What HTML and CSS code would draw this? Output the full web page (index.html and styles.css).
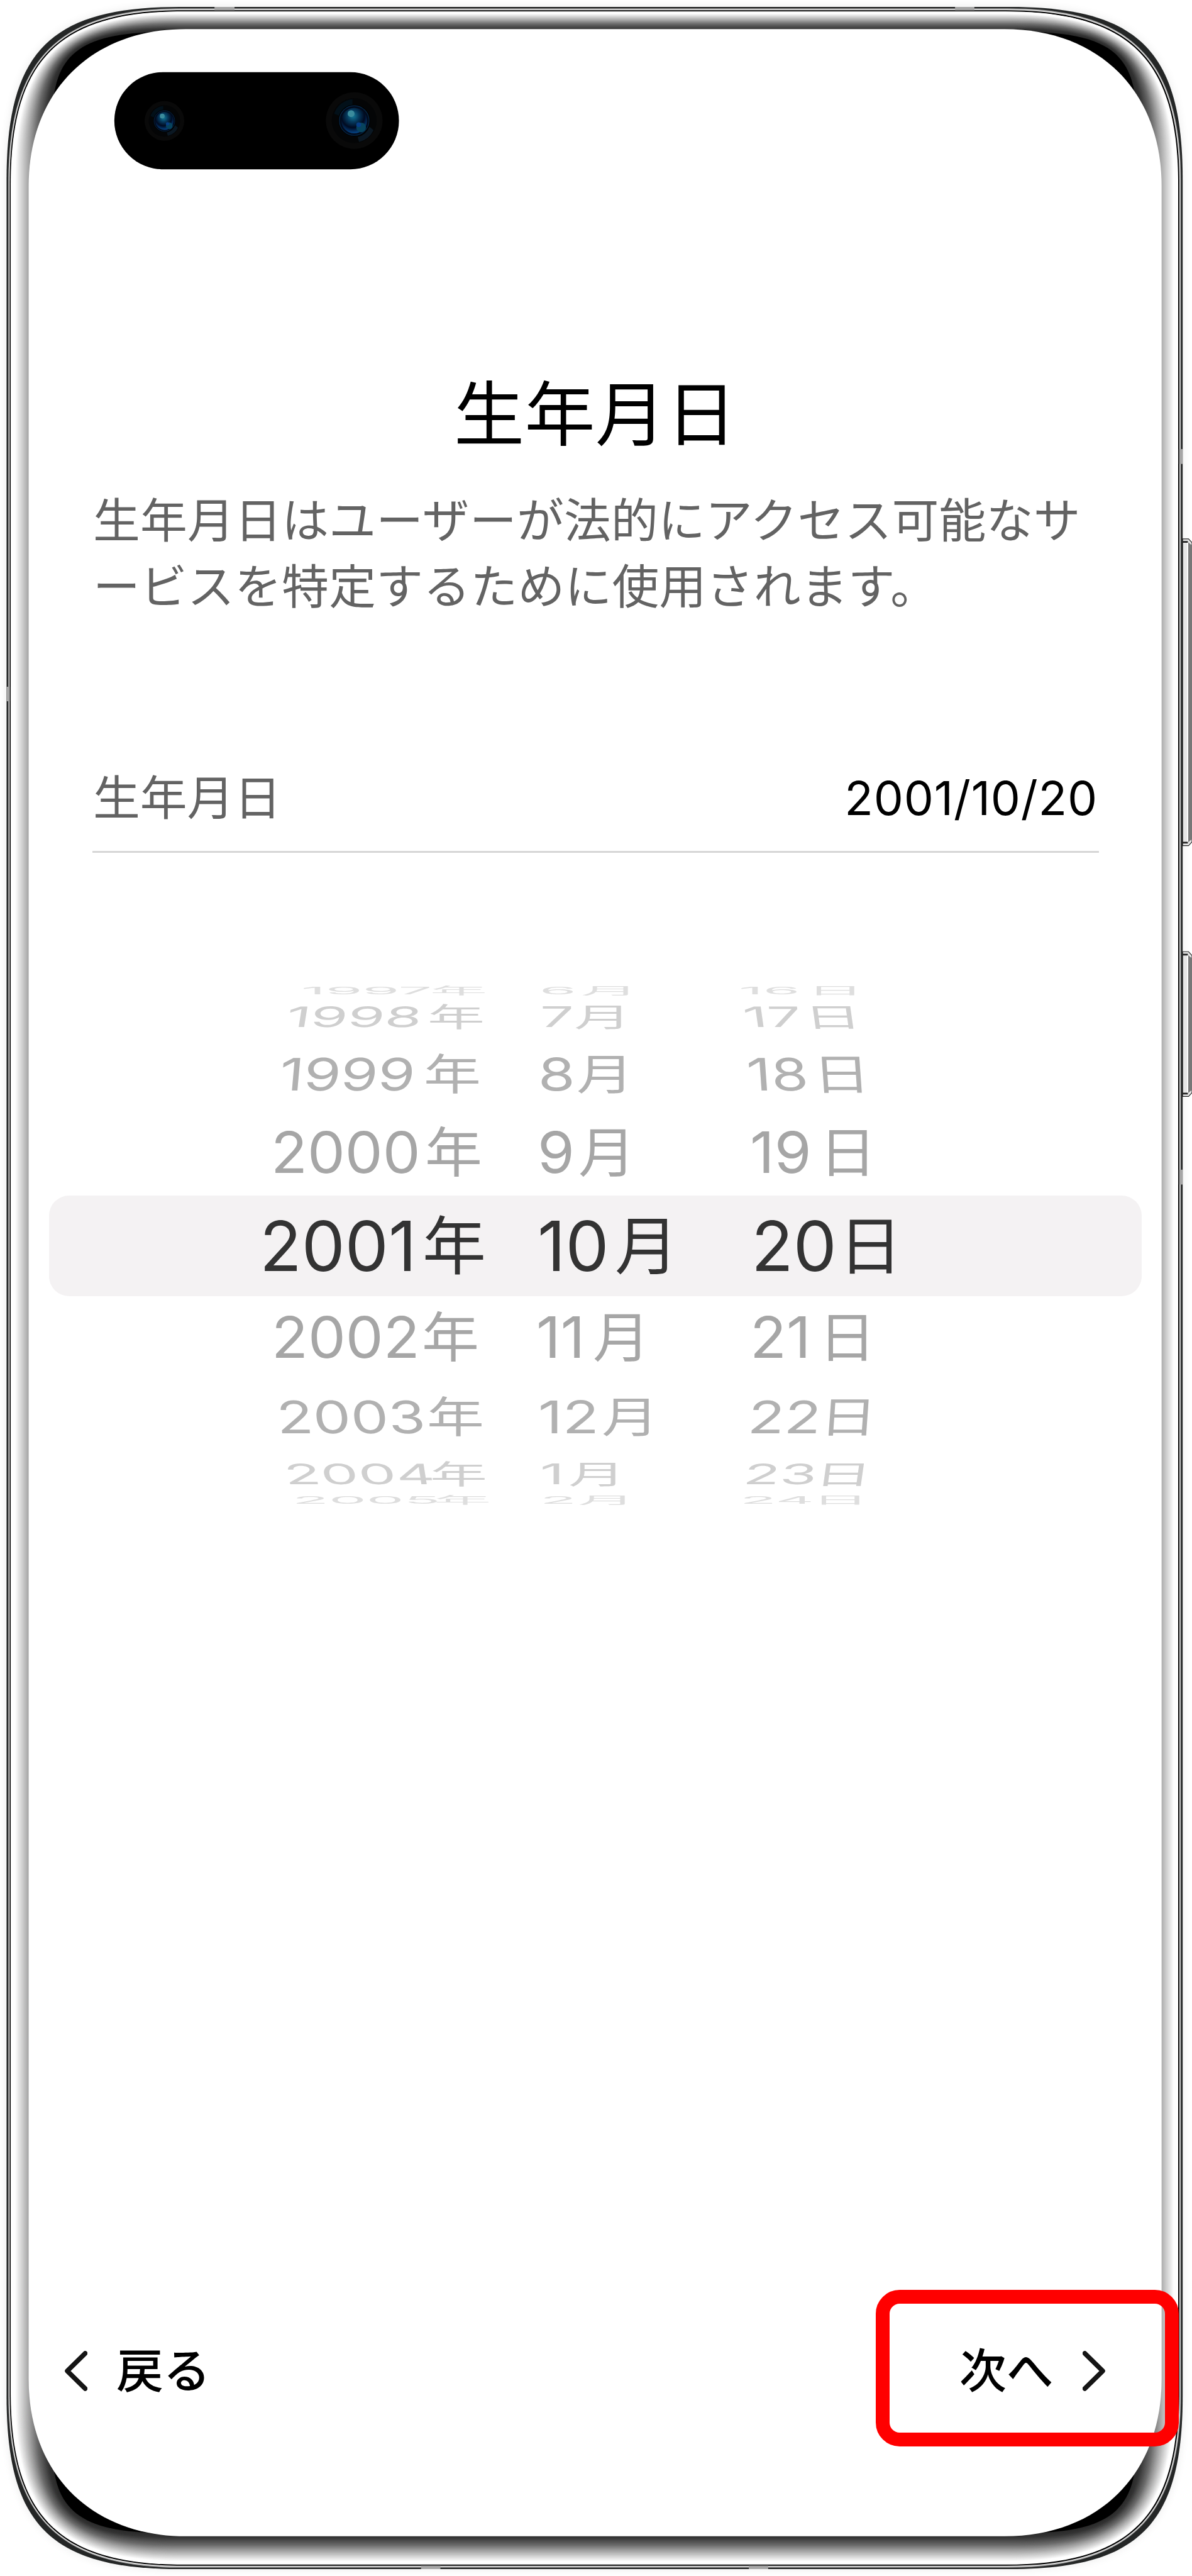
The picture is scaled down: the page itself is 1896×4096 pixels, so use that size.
FILE: index.html
```html
<!DOCTYPE html>
<html lang="ja">
<head>
    <meta charset="UTF-8">
    <title>生年月日</title>
    <meta name="viewport" content="width=device-width, initial-scale=1.0">
    <link rel="stylesheet" href="styles.css">
    <script src="frame.js" defer></script>
</head>
<body>
<div class="phone">
    <!-- phone body -->
    <svg class="frame" viewBox="0 0 3451 7457" preserveAspectRatio="none">
        <defs>
            <filter id="soft" x="-5%" y="-5%" width="110%" height="110%"><feGaussianBlur stdDeviation="14"/></filter>
            <radialGradient id="lens" cx="45%" cy="32%" r="70%">
                <stop offset="0" stop-color="#157a98"/>
                <stop offset=".35" stop-color="#05375a"/>
                <stop offset=".65" stop-color="#010a20"/>
                <stop offset="1" stop-color="#054a90"/>
            </radialGradient>
            <g id="camera">
                <circle r="82" fill="#090909"/>
                <circle r="65" fill="#040506"/>
                <path d="M-58-20A62 62 0 0 1-5-62L-5-46A46 46 0 0 0-44-14Z" fill="#021019"/>
                <path d="M56 28A62 62 0 0 1 14 62L10 48A48 48 0 0 0 44 18Z" fill="#0b1823"/>
                <circle r="46" fill="#000"/>
                <circle r="43" fill="#020b1c" stroke="#06294a" stroke-width="2"/>
                <circle r="37" fill="url(#lens)"/>
                <ellipse cx="-9" cy="-20" rx="10" ry="10" fill="#3b8b9c"/>
                <circle cx="20" cy="20" r="14" fill="#07435d"/>
                <circle cx="13" cy="12" r="7" fill="#073f86"/>
            </g>
        </defs>
        <g id="shell"></g>
        <g fill="#a6a6a6">
            <rect x="621" y="20" width="58" height="10"/>
            <rect x="2765" y="20" width="56" height="10"/>
            <rect x="1219" y="7427" width="56" height="10"/>
            <rect x="2168" y="7427" width="56" height="10"/>
            <rect x="19" y="1988" width="9" height="42"/>
            <rect x="3414" y="1300" width="10" height="43"/>
            <rect x="3414" y="3386" width="10" height="43"/>
        </g>
        <!-- volume / power -->
        <g stroke="#222" stroke-width="2">
            <path d="M3424 1560H3441L3451 1571V2437L3441 2448H3424Z" fill="#e6e6e6"/>
            <path d="M3424 2755H3441L3451 2766V3163L3441 3174H3424Z" fill="#e6e6e6"/>
        </g>
        <path d="M3440 1570L3451 1579V2429L3440 2438ZM3440 2765L3451 2774V3155L3440 3164Z" fill="#777"/>
        <path d="M3438.500 1570V2438M3438.500 2765V3164" stroke="#fff" stroke-width="3"/>
        <path d="M3424 1568.500H3439M3424 2439.500H3439M3424 2763.500H3439M3424 3165.500H3439" stroke="#222" stroke-width="5"/>
        <rect x="331" y="209" width="824" height="281" rx="140.500"/>
        <use href="#camera" transform="translate(476 350) scale(.7)"/>
        <use href="#camera" transform="translate(1025.500 349)"/>
    </svg>

    <main class="screen">
        <h1>生年月日</h1>
        <p class="note">生年月日はユーザーが法的にアクセス可能なサ<br>ービスを特定するために使用されます。</p>
        <div class="field">
            <span class="label">生年月日</span>
            <span class="value">2001/10/20</span>
        </div>

        <!-- date wheel -->
        <div class="wheel">
            <div class="row up4"><b>1997</b><i>年</i><b>6</b><i>月</i><b>16</b><i>日</i></div>
            <div class="row up3"><b>1998</b><i>年</i><b>7</b><i>月</i><b>17</b><i>日</i></div>
            <div class="row up2"><b>1999</b><i>年</i><b>8</b><i>月</i><b>18</b><i>日</i></div>
            <div class="row up1"><b>2000</b><i>年</i><b>9</b><i>月</i><b>19</b><i>日</i></div>
            <div class="row current"><b>2001</b><i>年</i><b>10</b><i>月</i><b>20</b><i>日</i></div>
            <div class="row down1"><b>2002</b><i>年</i><b>11</b><i>月</i><b>21</b><i>日</i></div>
            <div class="row down2"><b>2003</b><i>年</i><b>12</b><i>月</i><b>22</b><i>日</i></div>
            <div class="row down3"><b>2004</b><i>年</i><b>1</b><i>月</i><b>23</b><i>日</i></div>
            <div class="row down4"><b>2005</b><i>年</i><b>2</b><i>月</i><b>24</b><i>日</i></div>
        </div>

        <nav class="actions">
            <a class="back">
                <svg class="chevron" viewBox="0 0 36 64"><path d="M32.500 4L4 32L32.500 60"/></svg>
                <span>戻る</span>
            </a>
            <a class="next">
                <span>次へ</span>
                <svg class="chevron" viewBox="0 0 36 64"><path d="M3.500 4L32 32L3.500 60"/></svg>
            </a>
        </nav>
    </main>
</div>
</body>
</html>
```
FILE: styles.css
```css
body {
    margin: 0;
    background: #fff;
    overflow: hidden;
    font-family: Inter, "Noto Sans CJK JP", sans-serif;
}

.phone {
    position: relative;
    width: 1896px;
    height: 4096px;
    overflow: hidden;
}

.frame {
    position: absolute;
    left: 0;
    top: 0;
    width: 100%;
    height: 100%;
}

.screen {
    position: relative;
    box-sizing: border-box;
    height: 4096px;
    padding-top: 579px;
    display: flex;
    flex-direction: column;
}

h1 {
    margin: 0;
    height: 160px;
    line-height: 160px;
    padding-right: 2px;
    text-align: center;
    font-size: 112px;
    font-weight: 400;
    letter-spacing: .5px;
    color: #000;
}

.note {
    margin: 37px 0 0 148px;
    font-size: 74.800px;
    line-height: 104.500px;
    letter-spacing: .25px;
    white-space: nowrap;
    color: #636363;
}

.field {
    display: flex;
    justify-content: space-between;
    align-items: center;
    box-sizing: border-box;
    height: 172px;
    margin: 199px 148px 0 147px;
    padding: 0 2px 0 1px;
    border-bottom: 3px solid #d6d6d6;
    font-size: 74.800px;
    line-height: 100px;
}

.label {
    color: #636363;
}

.value {
    letter-spacing: .8px;
    color: #000;
}

/* wheel: every row gets flatter the further it is from the middle */
.wheel {
    margin: 211px 80px 0 78px;
}

.row {
    display: grid;
    align-items: center;
    white-space: nowrap;
    font-size: 95px;
    line-height: 16px;
}

.row b,
.row i {
    font-weight: 400;
    font-style: normal;
    transform: skewX(var(--skew, 0deg)) scaleY(var(--flat, 1));
}

.row i {
    font-size: 91px;
}

.current {
    height: 159.500px;
    border-radius: 32px;
    background: #f4f2f3;
    color: #333;
    font-size: 109.500px;
    padding-left: 335px;
    grid-template-columns: 259px 183px 123px 217px 139px 120px;
}

.current i {
    font-size: 101px;
}

.up1, .down1 {
    --flat: .95;
    color: #a6a6a6;
}

.up1 {
    height: 136px;
    padding-left: 353px;
    grid-template-columns: 245px 179px 65px 273px 110px 120px;
}

.down1 {
    height: 132px;
    padding-left: 354px;
    grid-template-columns: 239px 182px 90px 250px 109px 120px;
}

.up2, .down2 {
    --flat: .75;
    color: #b1b1b1;
}

.up2 {
    height: 115px;
    padding-left: 367px;
    grid-template-columns: 229px 182px 61px 271px 105px 120px;
}

.down2 {
    height: 121.500px;
    padding-left: 362px;
    grid-template-columns: 239px 177px 101px 233px 114px 120px;
}

.up3, .down3 {
    --flat: .47;
    color: #cfcfcf;
}

.up3 {
    height: 66.500px;
    padding-left: 378px;
    grid-template-columns: 224px 179px 54px 269px 97px 120px;
}

.down3 {
    height: 59px;
    padding-left: 374px;
    grid-template-columns: 232px 175px 45px 279px 113px 120px;
}

.up4, .down4 {
    --flat: .17;
    color: #dedede;
}

.up4 {
    height: 16.500px;
    padding-left: 401px;
    grid-template-columns: 205px 174px 66px 251px 108px 120px;
}

.down4 {
    box-sizing: border-box;
    height: 20.500px;
    padding-top: 4px;
    padding-left: 387px;
    grid-template-columns: 225px 169px 60px 258px 114px 120px;
}

.up2 b:first-child { --skew: -5deg; }
.up3 b:first-child { --skew: -9deg; }
.down2 b:first-child { --skew: 4deg; }
.down3 b:first-child { --skew: 9deg; }
.up2 :nth-child(n+5) { --skew: 4deg; }
.up3 :nth-child(n+5) { --skew: 8deg; }
.down2 :nth-child(n+5) { --skew: -4deg; }
.down3 :nth-child(n+5) { --skew: -8deg; }

/* bottom buttons */
.actions {
    display: flex;
    justify-content: space-between;
    align-items: center;
    margin: 1247.500px 21.500px 0 103px;
    height: 249px;
    font-size: 74.800px;
    font-weight: 500;
    line-height: 100px;
    color: #000;
}

.back {
    display: flex;
    align-items: center;
    gap: 46px;
    padding-top: 8px;
}

.next {
    display: flex;
    align-items: center;
    justify-content: flex-end;
    gap: 46px;
    box-sizing: border-box;
    width: 482px;
    height: 249px;
    padding: 8px 95px 0 0;
    border: 22px solid #f00;
    border-radius: 38px;
}

.chevron {
    width: 36px;
    height: 64px;
}

.chevron path {
    fill: none;
    stroke: #151515;
    stroke-width: 7.500;
    stroke-linecap: round;
    stroke-linejoin: round;
}
```
FILE: frame.js
```js
(function () {
    var shell = document.getElementById('shell');

    // rounded body: edges, corner length (lx, ly) and corner pull (kx, ky)
    function body(s) {
        var l = s[0], t = s[1], r = s[2], b = s[3];
        var lx = s[4], ly = s[5], kx = s[6], ky = s[7];
        return 'M' + [l, t + ly] +
            'C' + [l, t + ky, l + kx, t, l + lx, t] + 'H' + (r - lx) +
            'C' + [r - kx, t, r, t + ky, r, t + ly] + 'V' + (b - ly) +
            'C' + [r, b - ky, r - kx, b, r - lx, b] + 'H' + (l + lx) +
            'C' + [l + kx, b, l, b - ky, l, b - ly] + 'Z';
    }

    function draw(s, fill, extra) {
        var p = document.createElementNS('http://www.w3.org/2000/svg', 'path');
        p.setAttribute('d', body(s));
        p.setAttribute('fill', fill);
        if (extra) p.setAttribute('style', extra);
        shell.appendChild(p);
    }

    function mix(a, b, f) {
        return a.map(function (v, i) { return v + (b[i] - v) * f; });
    }

    // grey level over f = 0..1
    function level(stops, f) {
        for (var i = 1; i < stops.length; i++) {
            if (f <= stops[i][0]) {
                var a = stops[i - 1], b = stops[i];
                return Math.round(a[1] + (b[1] - a[1]) * (f - a[0]) / (b[0] - a[0]));
            }
        }
    }

    function ring(from, to, stops, steps) {
        for (var i = 0; i <= steps; i++) {
            var g = level(stops, i / steps);
            draw(mix(from, to, i / steps), 'rgb(' + g + ',' + g + ',' + g + ')');
        }
    }

    var outer = [19, 20, 3424, 7437, 500, 500, 128, 128];
    var rim = [24, 24, 3419, 7433, 500, 500, 147, 147];
    var line = [28, 29.5, 3414.5, 7427.5, 500, 500, 142, 142];
    var glass = [31, 33, 3411, 7424, 500, 500, 140, 140];
    var inner = [152, 92, 3290, 7333, 340, 250, 85, 58];

    draw(outer, '#000', 'filter:url(#soft);opacity:.08');
    draw(outer, '#242626');
    ring(rim, line, [[0, 140], [.4, 200], [1, 250]], 6);
    draw(line, '#000');
    ring(glass, inner, [[0, 255], [.1, 254], [.43, 163], [.62, 105], [.86, 52], [1, 42]], 70);
    draw(inner, '#000');
    draw([83, 84, 3363, 7342, 455, 455, 181, 181], '#fff');
})();
```
